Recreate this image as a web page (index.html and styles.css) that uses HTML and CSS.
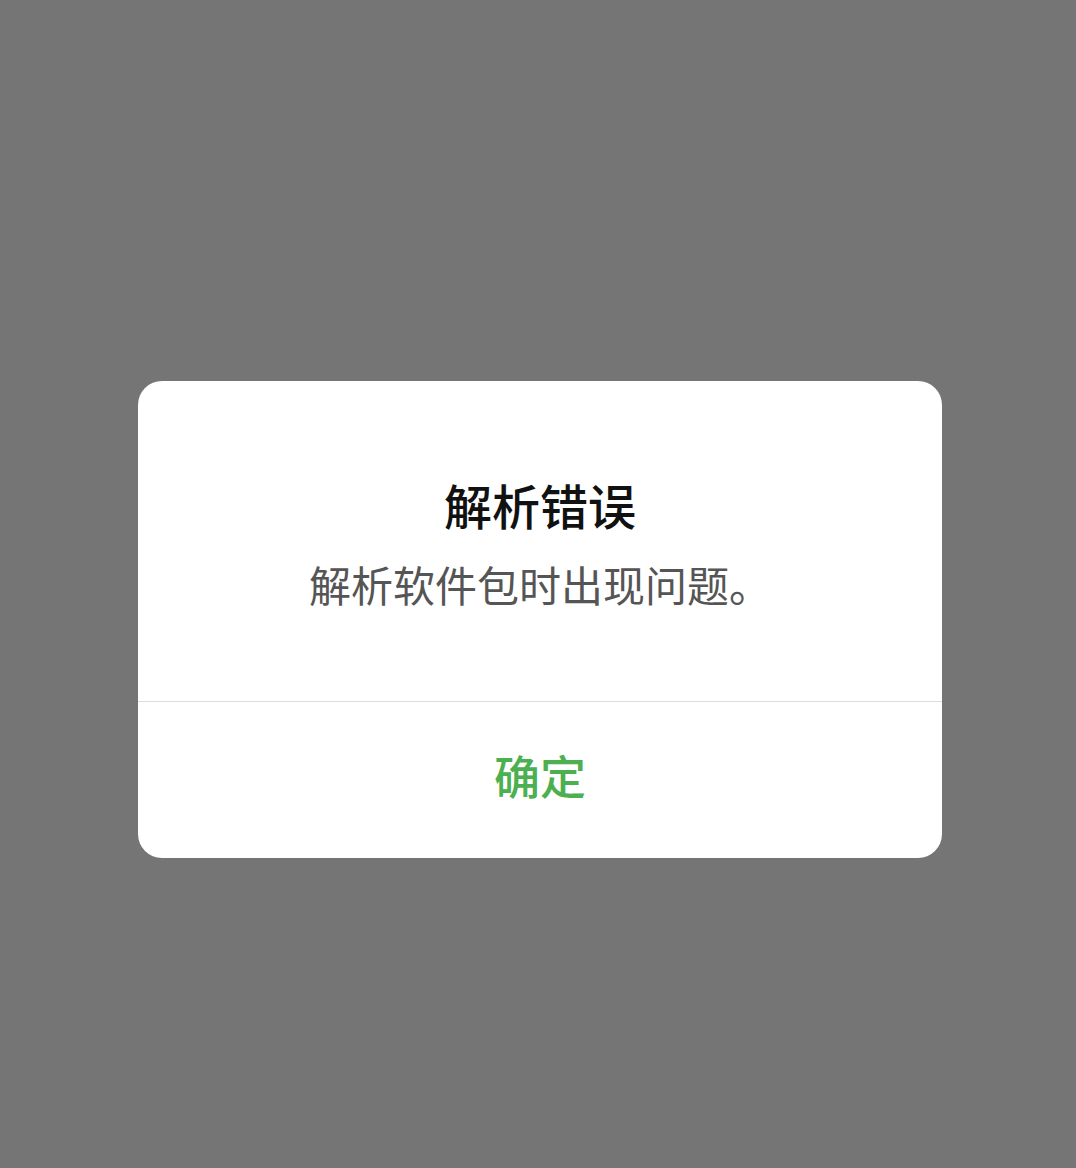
FILE: index.html
```html
<!DOCTYPE html>
<html lang="zh-CN">
<head>
<meta charset="utf-8">
<title>解析错误</title>
<link rel="stylesheet" href="styles.css">
</head>
<body>
<div class="screen">
  <div class="dialog">
    <div class="dialog-body">
      <div class="dialog-title">解析错误</div>
      <div class="dialog-message">解析软件包时出现问题。</div>
    </div>
    <div class="dialog-actions">
      <div class="dialog-button">确定</div>
    </div>
  </div>
</div>
</body>
</html>
```
FILE: styles.css
```css
html, body {
  margin: 0;
  padding: 0;
}
body {
  background: #757575;
  font-family: "Noto Sans CJK SC", "Noto Sans", sans-serif;
}
.screen {
  width: 1076px;
  height: 1168px;
  padding-top: 381px;
  box-sizing: border-box;
}
.dialog {
  margin-left: 138px;
  width: 804px;
  height: 477px;
  background: #fff;
  border-radius: 24px;
  display: flex;
  flex-direction: column;
  overflow: hidden;
}
.dialog-body {
  height: 321px;
  box-sizing: border-box;
  padding-top: 93px;
  border-bottom: 1px solid #dcdcdc;
  display: flex;
  flex-direction: column;
  align-items: center;
  gap: 22px;
}
.dialog-title {
  font-size: 48px;
  line-height: 60px;
  font-weight: 500;
  color: #111;
}
.dialog-message {
  font-size: 42px;
  line-height: 56px;
  color: #555;
}
.dialog-actions {
  flex: 1;
  display: flex;
  align-items: center;
  justify-content: center;
  padding-bottom: 12px;
}
.dialog-button {
  font-size: 46px;
  line-height: 60px;
  font-weight: 500;
  color: #4caf50;
}
```
